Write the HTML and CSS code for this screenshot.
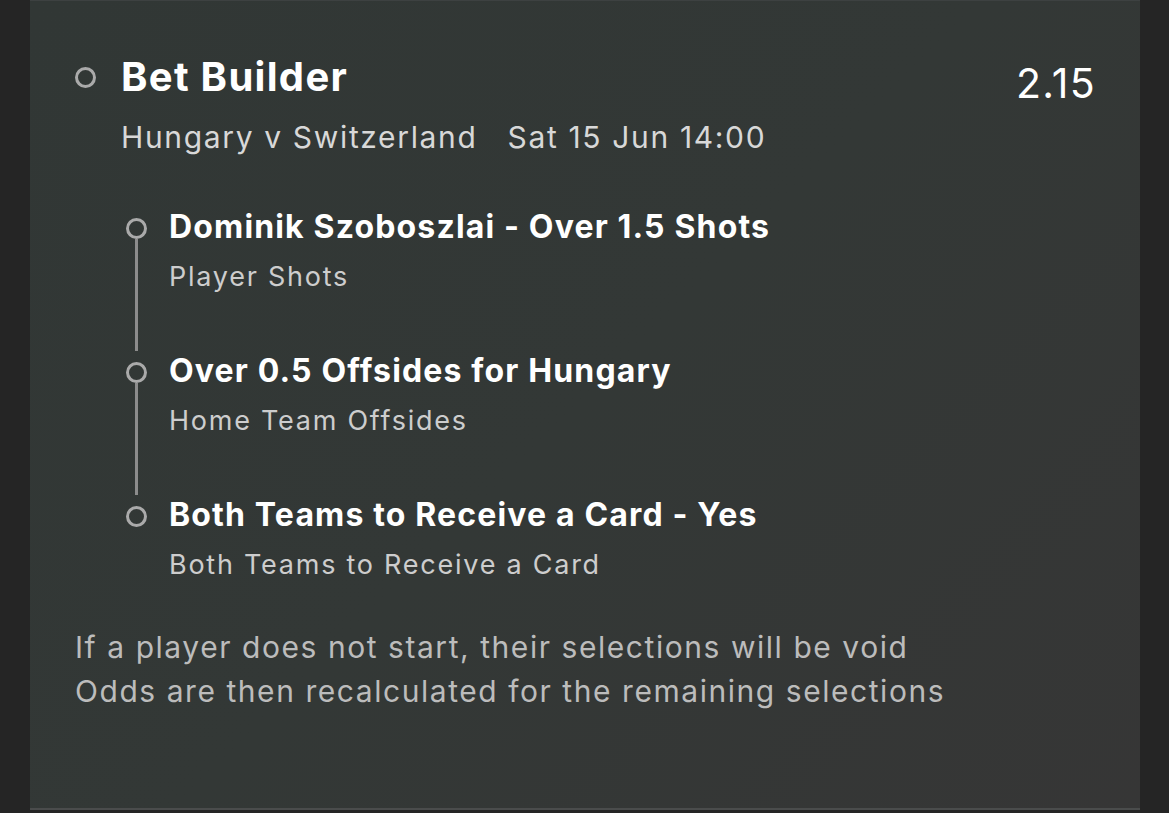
FILE: index.html
```html
<!DOCTYPE html>
<html lang="en">
<head>
<meta charset="utf-8">
<title>Bet Builder</title>
<link rel="stylesheet" href="styles.css">
</head>
<body>
<main class="panel">
  <header class="head">
    <span class="ring head-ring"></span>
    <div class="head-text">
      <h1 class="title">Bet Builder</h1>
      <p class="event"><span>Hungary v Switzerland</span><span>Sat 15 Jun 14:00</span></p>
    </div>
    <div class="odds">2.15</div>
  </header>

  <ol class="steps">
    <li class="step">
      <div class="marker"><span class="ring"></span><span class="rail"></span></div>
      <div class="step-text">
        <div class="step-title">Dominik Szoboszlai - Over 1.5 Shots</div>
        <div class="step-sub">Player Shots</div>
      </div>
    </li>
    <li class="step">
      <div class="marker"><span class="ring"></span><span class="rail"></span></div>
      <div class="step-text">
        <div class="step-title">Over 0.5 Offsides for Hungary</div>
        <div class="step-sub">Home Team Offsides</div>
      </div>
    </li>
    <li class="step">
      <div class="marker"><span class="ring"></span></div>
      <div class="step-text">
        <div class="step-title">Both Teams to Receive a Card - Yes</div>
        <div class="step-sub">Both Teams to Receive a Card</div>
      </div>
    </li>
  </ol>

  <p class="note">If a player does not start, their selections will be void<br>Odds are then recalculated for the remaining selections</p>
</main>
</body>
</html>
```

FILE: styles.css
```css
* { box-sizing: border-box; }
html, body { margin: 0; padding: 0; }
body {
  background: #252525;
  font-family: Inter, "Noto Sans", "Liberation Sans", sans-serif;
  height: 813px;
  overflow: hidden;
  padding-left: 30px;
}
.panel {
  width: 1110px;
  height: 810px;
  background: linear-gradient(135deg, #313735 0%, #333836 50%, #363636 100%);
  border-top: 1px solid #3d4141;
  border-bottom: 2px solid #4a4c4c;
  padding: 52px 44px 0 45px;
}
.head {
  display: flex;
  align-items: flex-start;
}
.ring {
  display: block;
  width: 21px;
  height: 21px;
  border-radius: 50%;
  border: 3px solid #aaaaaa;
  flex: none;
}
.head-ring { margin-top: 14px; }
.head-text {
  margin-left: 25px;
  flex: 1;
}
.title {
  margin: 0;
  font-size: 40px;
  line-height: 48px;
  font-weight: 700;
  letter-spacing: 1.3px;
  color: #ffffff;
}
.event {
  margin: 16px 0 0;
  font-size: 30px;
  line-height: 40px;
  letter-spacing: 1.65px;
  color: #d8d8d8;
  display: flex;
  gap: 30px;
}
.odds {
  font-size: 41px;
  line-height: 48px;
  letter-spacing: 1.3px;
  color: #ffffff;
  margin-top: 6px;
}
.steps {
  list-style: none;
  margin: 50px 0 0 51px;
  padding: 0;
}
.step {
  display: flex;
}
.marker {
  width: 21px;
  display: flex;
  flex-direction: column;
  align-items: center;
  padding-top: 11px;
}
.rail {
  flex: 1;
  width: 3px;
  background: #8c8c8c;
}
.step-text {
  margin-left: 22px;
  padding-bottom: 56px;
}
.step:last-child .step-text { padding-bottom: 0; }
.step-title {
  font-size: 32px;
  line-height: 40px;
  font-weight: 700;
  letter-spacing: 1.15px;
  color: #ffffff;
}
.step-sub {
  margin-top: 12px;
  font-size: 27px;
  line-height: 36px;
  letter-spacing: 1.75px;
  color: #cdcdcd;
}
.note {
  margin: 42px 0 0;
  font-size: 30px;
  line-height: 44px;
  letter-spacing: 1.55px;
  color: #bcbcbc;
}
```
